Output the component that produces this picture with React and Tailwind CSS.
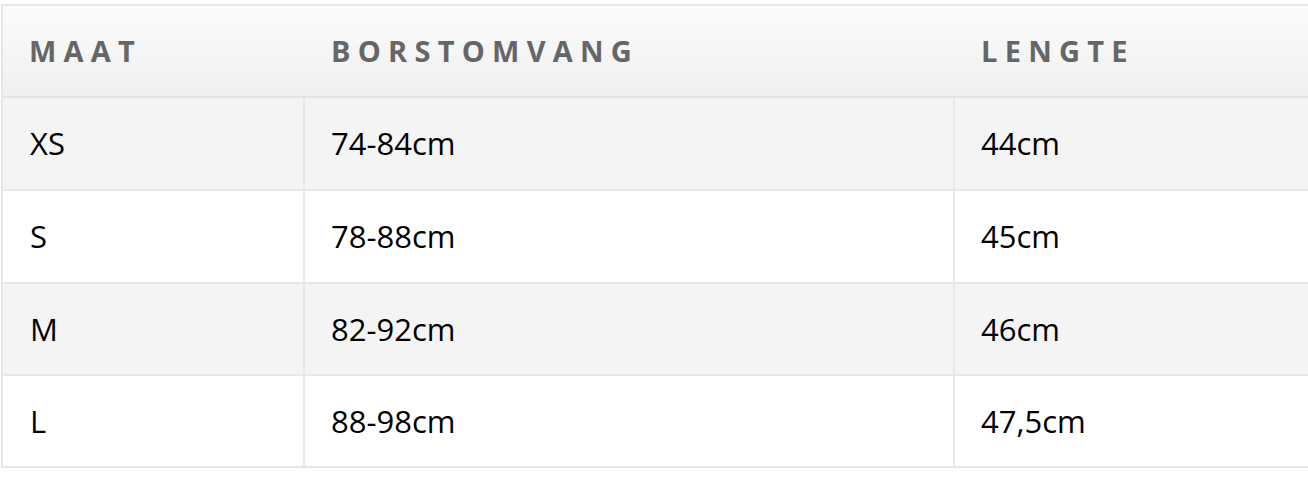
export default function App() {
  const rows = [
    { m: "XS", b: "74-84cm", l: "44cm", h: "h-[93px]", bg: "bg-[#f4f4f4]" },
    { m: "S", b: "78-88cm", l: "45cm", h: "h-[93px]", bg: "bg-white" },
    { m: "M", b: "82-92cm", l: "46cm", h: "h-[92px]", bg: "bg-[#f4f4f4]" },
    { m: "L", b: "88-98cm", l: "47,5cm", h: "h-[90px]", bg: "bg-white" },
  ];
  return (
    <div className="w-[1308px] h-[484px] overflow-hidden bg-white pt-[4px] pl-[1px]" style={{ fontFamily: '"Open Sans", "Noto Sans", sans-serif' }}>
      <div className="w-[1330px] border-2 border-[#e6e6e6] box-border">
        <div className="flex h-[92px] bg-gradient-to-b from-[#fbfbfb] to-[#f0f0f0] border-b-2 border-[#e3e3e3] text-[#666666] font-bold text-[29px] tracking-[0.25em]">
          <div className="w-[302px] pl-[26px] flex items-center">MAAT</div>
          <div className="w-[650px] pl-[26px] flex items-center">BORSTOMVANG</div>
          <div className="flex-1 pl-[26px] flex items-center">LENGTE</div>
        </div>
        {rows.map((r, i) => (
          <div key={r.m} className={`flex ${r.h} ${r.bg} text-[31px] text-black ${i < rows.length - 1 ? "border-b-2 border-[#e8e8e8]" : ""}`}>
            <div className="w-[302px] pl-[27px] flex items-center border-r-2 border-[#e8e8e8]">{r.m}</div>
            <div className="w-[650px] pl-[26px] flex items-center border-r-2 border-[#e8e8e8]">{r.b}</div>
            <div className="flex-1 pl-[26px] flex items-center">{r.l}</div>
          </div>
        ))}
      </div>
    </div>
  );
}
